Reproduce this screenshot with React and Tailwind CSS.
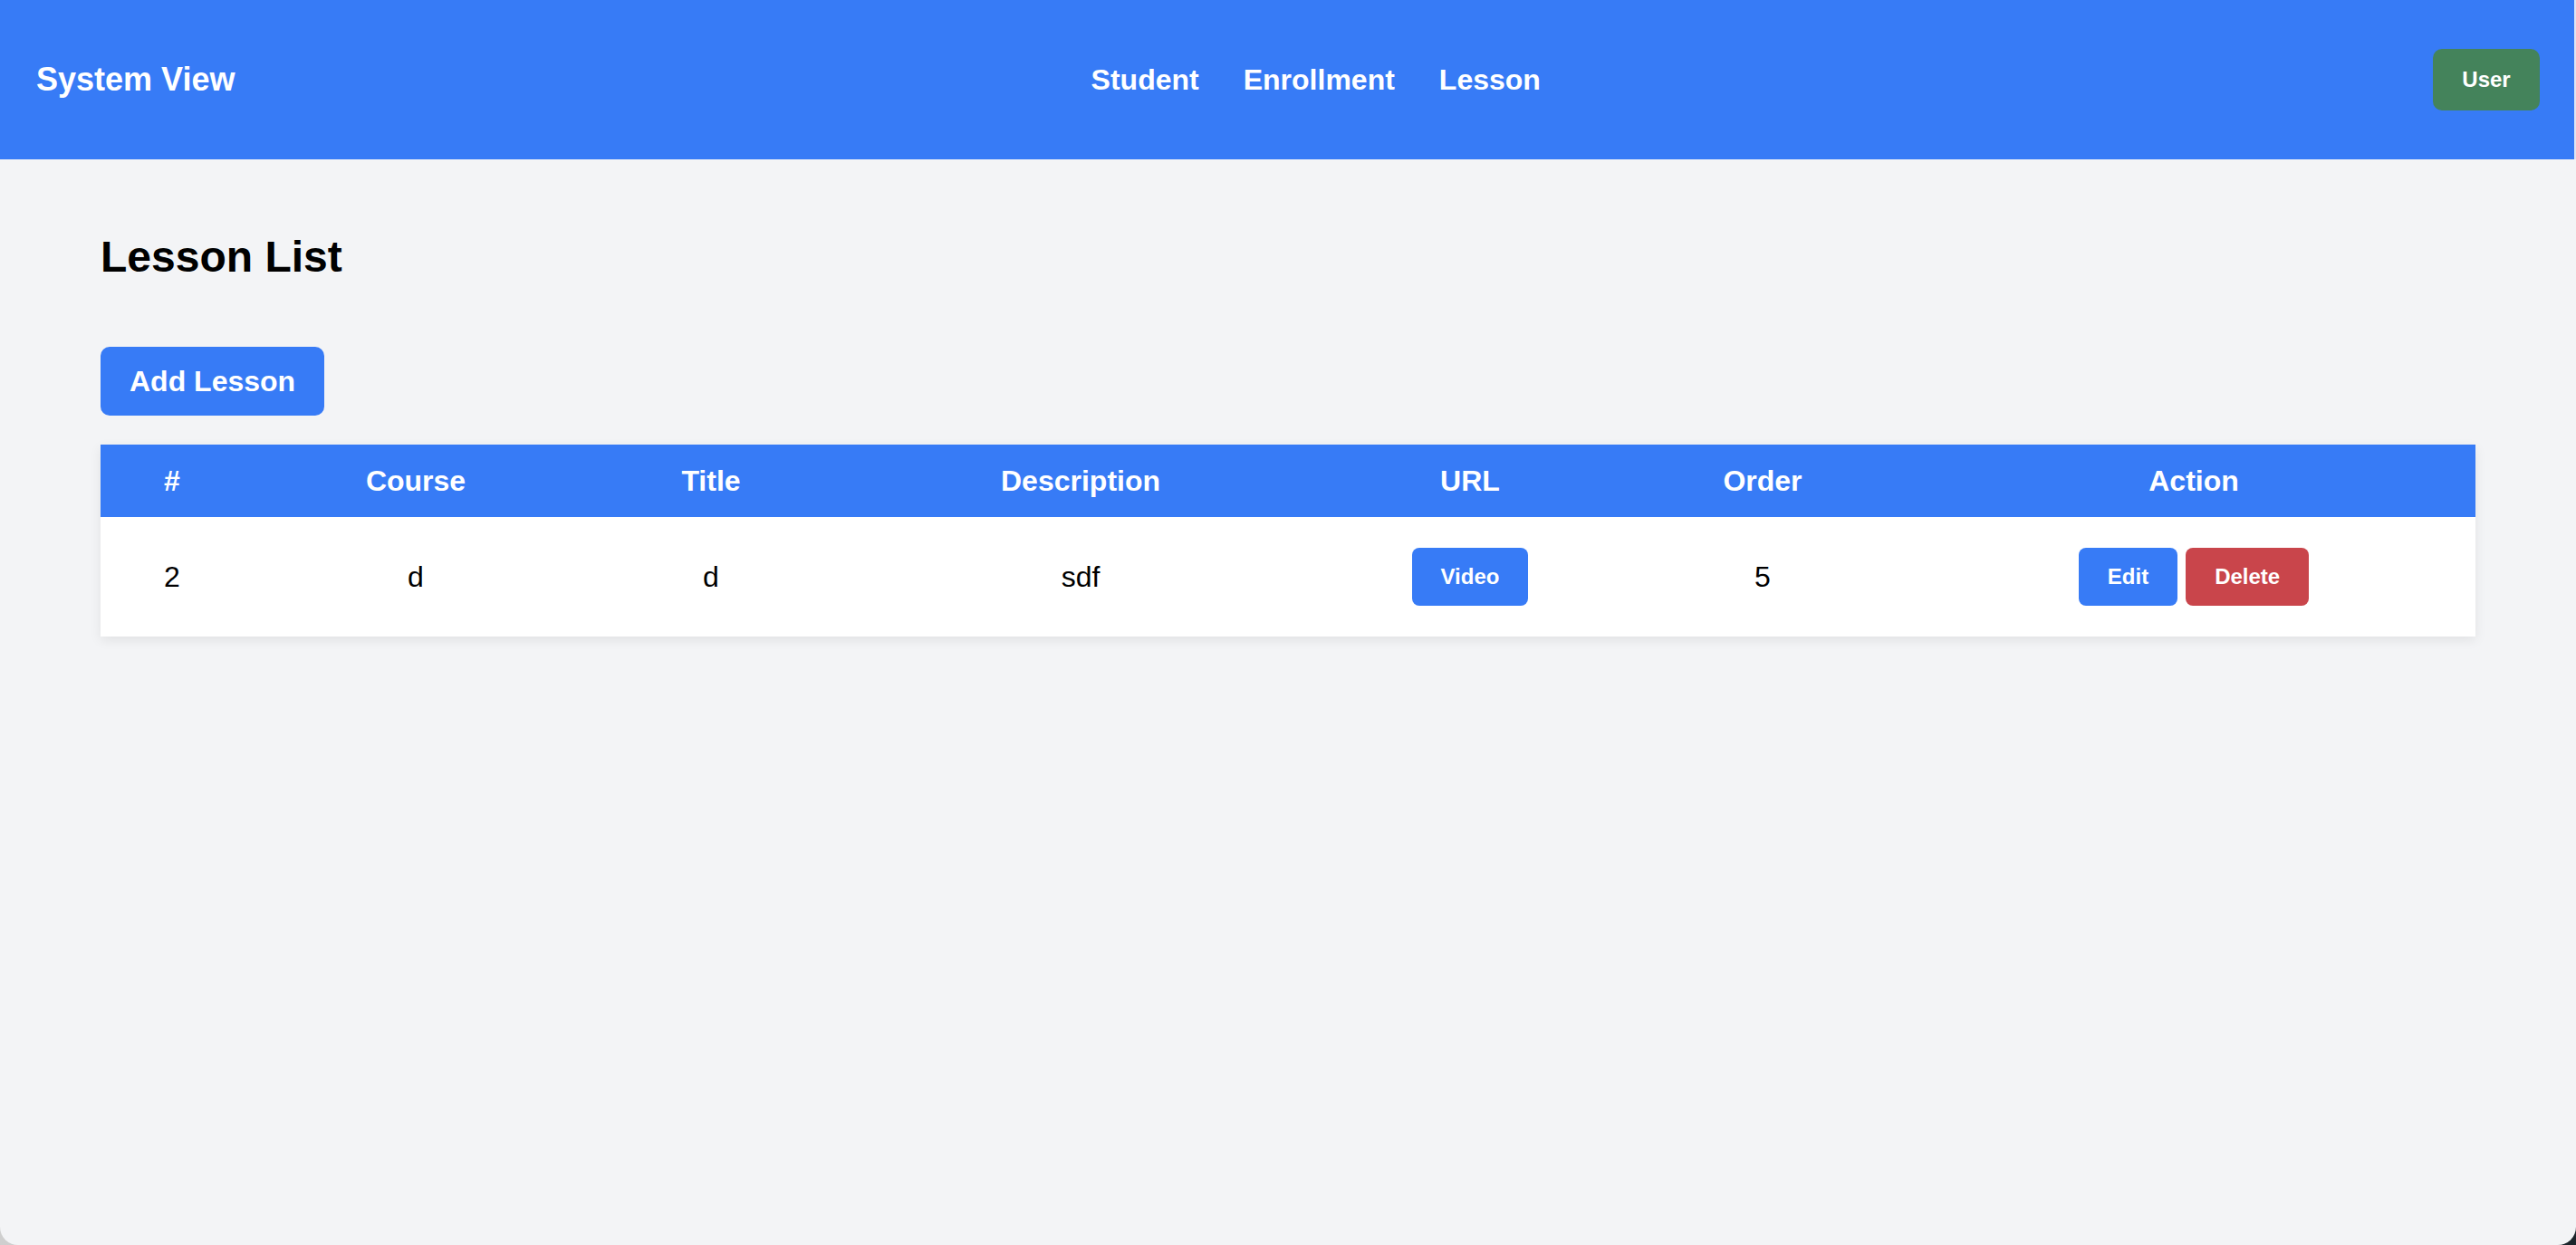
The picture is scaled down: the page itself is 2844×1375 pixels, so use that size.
import { useState } from "react";

const lessons = [
  { id: 2, course: "d", title: "d", description: "sdf", url: "#", order: 5 },
];

function App() {
  const [rows] = useState(lessons);

  return (
    <div
      className="h-screen bg-gradient-to-r from-[#cfcfcf] to-[#1c252b]"
      style={{ fontFamily: '"Liberation Sans", Arial, sans-serif' }}
    >
      <div className="flex h-full flex-col overflow-hidden rounded-b-[20px] bg-[#f3f4f6]">
        <header className="flex h-[176px] shrink-0 items-center justify-between border-r-2 border-[#dfe6f3] bg-[#377bf6] pl-[40px] pr-[38px] text-white">
          <h1 className="text-[36px] font-bold leading-[48px]">System View</h1>
          <nav className="mr-[40px] flex gap-[49px] text-[32px] font-bold leading-[48px]">
            <a href="#">Student</a>
            <a href="#">Enrollment</a>
            <a href="#">Lesson</a>
          </nav>
          <button className="h-[68px] w-[118px] rounded-[10px] bg-[#44835b] text-[24px] font-bold text-white">
            User
          </button>
        </header>

        <main className="px-[111px] pt-[80px]">
          <h2 className="text-[48px] font-bold leading-[55px] text-black">
            Lesson List
          </h2>

          <button className="mt-[72px] h-[76px] rounded-[10px] bg-[#377bf6] px-[32px] text-[32px] font-bold text-white">
            Add Lesson
          </button>

          <table className="mt-[32px] w-full table-fixed bg-white text-center shadow-[0_4px_12px_rgba(0,0,0,0.08)]">
            <colgroup>
              <col className="w-[158px]" />
              <col className="w-[380px]" />
              <col className="w-[272px]" />
              <col className="w-[544px]" />
              <col className="w-[316px]" />
              <col className="w-[330px]" />
              <col />
            </colgroup>
            <thead className="bg-[#377bf6] text-white">
              <tr className="h-[80px] text-[32px] font-bold">
                <th>#</th>
                <th>Course</th>
                <th>Title</th>
                <th>Description</th>
                <th>URL</th>
                <th>Order</th>
                <th>Action</th>
              </tr>
            </thead>
            <tbody>
              {rows.map((l) => (
                <tr key={l.id} className="h-[132px] text-[32px] text-black">
                  <td>{l.id}</td>
                  <td>{l.course}</td>
                  <td>{l.title}</td>
                  <td>{l.description}</td>
                  <td>
                    <a
                      href={l.url}
                      className="inline-block h-[64px] rounded-[8px] bg-[#377bf6] px-[32px] text-[24px] font-bold leading-[64px] text-white"
                    >
                      Video
                    </a>
                  </td>
                  <td>{l.order}</td>
                  <td>
                    <div className="flex justify-center gap-[9px]">
                      <button className="h-[64px] rounded-[8px] bg-[#377bf6] px-[32px] text-[24px] font-bold text-white">
                        Edit
                      </button>
                      <button className="h-[64px] rounded-[8px] bg-[#c9454b] px-[32px] text-[24px] font-bold text-white">
                        Delete
                      </button>
                    </div>
                  </td>
                </tr>
              ))}
            </tbody>
          </table>
        </main>
      </div>
    </div>
  );
}

export default App;
